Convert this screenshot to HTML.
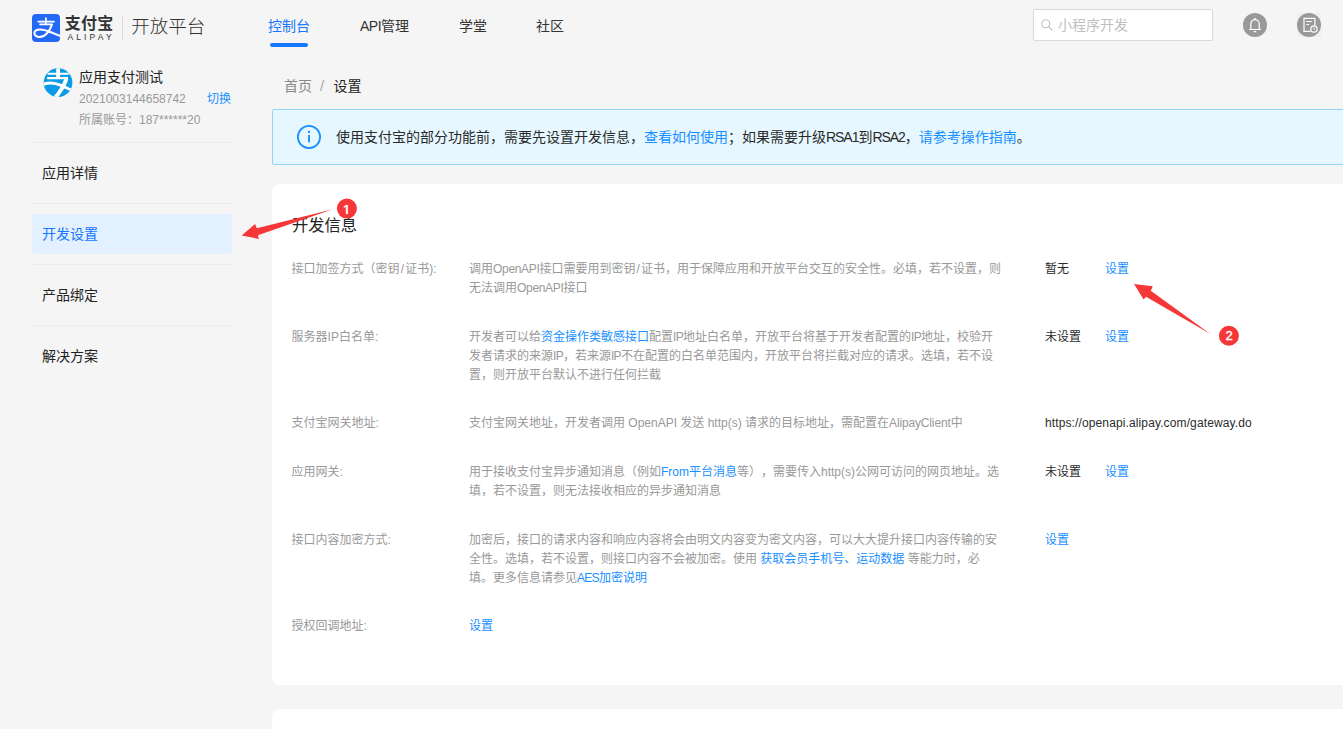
<!DOCTYPE html>
<html lang="zh-CN">
<head>
<meta charset="utf-8">
<title>开放平台 - 设置</title>
<style>
*{box-sizing:border-box;margin:0;padding:0}
html,body{width:1343px;height:729px;overflow:hidden;background:#f5f5f5}
body{font-family:"Liberation Sans","Noto Sans CJK SC",sans-serif;color:#333;position:relative;font-size:14px;text-spacing-trim:space-all}
a{color:#1890ff;text-decoration:none}
.abs{position:absolute;white-space:nowrap}
/* header */
.logo-sq{left:32px;top:14px;width:28px;height:28px;background:#2469f6;overflow:hidden;border-radius:4px}
.logo-cn{left:64.700px;top:12px;font-size:16px;font-weight:700;color:#333;letter-spacing:.3px;line-height:24px}
.logo-en{left:67.400px;top:31px;font-size:8.5px;color:#333;letter-spacing:3.150px;line-height:12px}
.logo-sep{left:122px;top:16px;width:1px;height:24px;background:#d9d9d9}
.logo-op{left:131.300px;top:12px;font-size:18.5px;color:#333;line-height:30px;font-weight:300}
.nav{top:16px;font-size:14px;line-height:20px;color:#333}
.nav.on{color:#1677ff}
.nav-bar{left:270px;top:43px;width:38px;height:4px;border-radius:2px;background:#1677ff}
.search{left:1033px;top:9px;width:180px;height:32px;background:#fff;border:1px solid #d9d9d9;border-radius:2px}
.search span{position:absolute;left:24px;top:5px;font-size:14px;line-height:20px;color:#bfbfbf}
.ico{width:24px;height:24px;border-radius:12px;background:#999}
/* sidebar */
.side-hr{left:32px;width:200px;height:1px;background:#ebebeb}
.side{left:42px;font-size:14px;line-height:20px;color:#222}
.side-on{left:32px;top:214px;width:200px;height:40px;background:#e3f0ff;border-radius:4px}
.g12{font-size:12px;line-height:18px;color:#999}
/* main */
.crumb{left:284px;top:76px;font-size:14px;line-height:20px;color:#888}
.crumb b{font-weight:400;color:#222}
.alert{left:272px;top:109px;width:1100px;height:56px;background:#e6f7ff;border:1px solid #91d5ff;border-radius:2px}
.alert-t .r{font-size:14px;letter-spacing:-1.050px}
.alert-t{left:336px;top:127px;font-size:14px;line-height:20px;color:#2a2a2a}
.card{left:272px;top:184px;width:1100px;height:501px;background:#fff;border-radius:8px}
.card2{left:272px;top:709px;width:1100px;height:60px;background:#fff;border-radius:8px}
.h{left:292px;top:212.500px;font-size:16.300px;line-height:24px;color:#222}
.t{font-size:12px;line-height:19px;color:#999;white-space:nowrap}
.lab{left:291.600px}
.desc{left:469px}
.val{left:1045px;color:#2b2b2b}
.lnk{left:1105px;color:#1890ff}
.t i{font-style:normal;letter-spacing:-.7px}
</style>
</head>
<body>
<!-- header -->
<div class="abs logo-sq"></div>
<svg class="abs" style="left:32px;top:14px" width="28" height="28" viewBox="0 0 28 28" fill="none" stroke="#fff" stroke-width="1.750" stroke-linecap="round"><path d="M6.200 7.500h15.800M13.900 4v6.200M8 10.300h12.200"/><path d="M19.800 10.800C18.800 14 17.500 16.500 15.400 18.800C13 21.500 10.500 23 7.600 23C4.500 23 2.400 21.300 2.400 19.200C2.400 17 4.800 15.500 8.200 15.500C11.500 15.500 14.500 16.500 18.300 18C21.500 19.300 25 20.800 29 22.200" stroke-width="2.100"/></svg>
<div class="abs logo-cn">支付宝</div>
<div class="abs logo-en">ALIPAY</div>
<div class="abs logo-sep"></div>
<div class="abs logo-op">开放平台</div>
<div class="abs nav on" style="left:268px">控制台</div>
<div class="abs nav-bar"></div>
<div class="abs nav" style="left:360px"><span style="letter-spacing:-.5px">API</span>管理</div>
<div class="abs nav" style="left:459px">学堂</div>
<div class="abs nav" style="left:536px">社区</div>
<div class="abs search"><span>小程序开发</span></div>
<svg class="abs" style="left:1040px;top:18px" width="14" height="14" viewBox="0 0 14 14" fill="none" stroke="#bfbfbf" stroke-width="1.1"><circle cx="5.7" cy="5.7" r="4"/><path d="M8.6 8.6L12 12" stroke-linecap="round"/></svg>
<svg class="abs" style="left:1243px;top:13px" width="24" height="24" viewBox="0 0 24 24" fill="none" stroke="#fff" stroke-width="1.2"><circle cx="12" cy="12" r="12" fill="#999" stroke="none"/><path d="M7.800 16.500V10.800a4.200 4.200 0 0 1 8.400 0v5.700M6 16.500h12M10.700 18.700h2.600"/><circle cx="12" cy="5.600" r="0.800" fill="#fff" stroke="none"/></svg>
<div class="abs" style="left:1297px;top:13px;width:24px;height:24px;background:#efefef"></div>
<svg class="abs" style="left:1297px;top:13px" width="24" height="24" viewBox="0 0 24 24" fill="none" stroke="#fff" stroke-width="1.2"><circle cx="12" cy="12" r="12" fill="#999" stroke="none"/><path d="M13.500 18.400H7V5.400h10.900v7M9.300 8.500h5.600M9.300 11.500h3"/><circle cx="17" cy="16" r="3.200" fill="#999"/><path d="M17 14.300V16l1 0.800" stroke-width="0.900"/></svg>

<!-- sidebar -->
<svg class="abs" style="left:40px;top:64px" width="36" height="36" viewBox="40 64 36 36"><defs><clipPath id="cc"><circle cx="58.050" cy="82.650" r="14.300"/></clipPath></defs><circle cx="58.050" cy="82.650" r="14.300" fill="#0b9be6"/><g clip-path="url(#cc)" fill="none" stroke="#fff"><path d="M58.100 66V78" stroke-width="3.800"/><path d="M47.600 73.850H68.800" stroke-width="2"/><path d="M47.100 78.100H68" stroke-width="2.200"/><path d="M66.500 78.300C64.800 84 62 90 54.500 98.500" stroke-width="4"/><path d="M42 84.800C48 82 54 82.300 61 85.400S68 89 73 90.400" stroke-width="3"/></g></svg>
<div class="abs side" style="left:79px;top:67px">应用支付测试</div>
<div class="abs g12" style="left:79px;top:90px">2021003144658742</div>
<div class="abs g12" style="left:207px;top:90px;color:#1890ff">切换</div>
<div class="abs g12" style="left:79px;top:111px">所属账号：187******20</div>
<div class="abs side-hr" style="top:142px"></div>
<div class="abs side" style="top:163px">应用详情</div>
<div class="abs side-hr" style="top:203px"></div>
<div class="abs side-on"></div>
<div class="abs side" style="top:224px;color:#1677ff">开发设置</div>
<div class="abs side-hr" style="top:264px"></div>
<div class="abs side" style="top:285px">产品绑定</div>
<div class="abs side-hr" style="top:325px"></div>
<div class="abs side" style="top:346px">解决方案</div>

<!-- main -->
<div class="abs crumb">首页</div>
<div class="abs crumb" style="left:320px;color:#aaa;font-size:15px">/</div>
<div class="abs crumb" style="left:333.500px;color:#222">设置</div>
<div class="abs alert"></div>
<div class="abs alert-t">使用支付宝的部分功能前，需要先设置开发信息，<a>查看如何使用</a>；如果需要升级<span class="r">RSA1</span>到<span class="r">RSA2</span>，<a>请参考操作指南</a>。</div>
<div class="abs card"></div>
<div class="abs card2"></div>
<div class="abs h">开发信息</div>

<div class="abs t lab" style="top:260px">接口加签方式（密钥<i style="letter-spacing:0;padding:0 1.100px">/</i>证书):</div>
<div class="abs t desc" style="top:260px">调用<i style="letter-spacing:-.32px">OpenAPI</i>接口需要用到密钥<i style="letter-spacing:0;padding:0 1.100px">/</i>证书，用于保障应用和开放平台交互的安全性。必填，若不设置，则<br>无法调用<i style="letter-spacing:-.32px">OpenAPI</i>接口</div>
<div class="abs t val" style="top:260px">暂无</div>
<div class="abs t lnk" style="top:260px">设置</div>

<div class="abs t lab" style="top:328px">服务器IP白名单:</div>
<div class="abs t desc" style="top:328px">开发者可以给<a>资金操作类敏感接口</a>配置<i>IP</i>地址白名单，开放平台将基于开发者配置的<i>IP</i>地址，校验开<br>发者请求的来源<i>IP</i>，若来源<i>IP</i>不在配置的白名单范围内，开放平台将拦截对应的请求。选填，若不设<br>置，则开放平台默认不进行任何拦截</div>
<div class="abs t val" style="top:328px">未设置</div>
<div class="abs t lnk" style="top:328px">设置</div>

<div class="abs t lab" style="top:414px">支付宝网关地址:</div>
<div class="abs t desc" style="top:414px">支付宝网关地址，开发者调用 OpenAPI 发送 http(s) 请求的目标地址，需配置在<i style="letter-spacing:-.15px">AlipayClient</i>中</div>
<div class="abs t val" style="top:414px;letter-spacing:.12px">https://openapi.alipay.com/gateway.do</div>

<div class="abs t lab" style="top:463px">应用网关:</div>
<div class="abs t desc" style="top:463px">用于接收支付宝异步通知消息（例如<a>From平台消息</a>等），需要传入http(s)公网可访问的网页地址。选<br>填，若不设置，则无法接收相应的异步通知消息</div>
<div class="abs t val" style="top:463px">未设置</div>
<div class="abs t lnk" style="top:463px">设置</div>

<div class="abs t lab" style="top:531px">接口内容加密方式:</div>
<div class="abs t desc" style="top:531px">加密后，接口的请求内容和响应内容将会由明文内容变为密文内容，可以大大提升接口内容传输的安<br>全性。选填，若不设置，则接口内容不会被加密。使用 <a>获取会员手机号、运动数据</a> 等能力时，必<br>填。更多信息请参见<a><i>AES</i>加密说明</a></div>
<div class="abs t lnk" style="top:531px;left:1045px">设置</div>

<div class="abs t lab" style="top:617px">授权回调地址:</div>
<div class="abs t lnk" style="top:617px;left:469px">设置</div>

<svg class="abs" style="left:297px;top:125px" width="24" height="24" viewBox="0 0 24 24" fill="none" stroke="#1890ff"><circle cx="12" cy="12" r="11.100" stroke-width="1.800"/><path d="M12 10v7.300" stroke-width="1.900"/><circle cx="12" cy="7" r="1.150" fill="#1890ff" stroke="none"/></svg>

<svg class="abs" style="left:0;top:0" width="1343" height="729" viewBox="0 0 1343 729">
<g fill="#f63737">
<path d="M241.700 235.600L255.100 224.100L256.800 228.200L332.800 209.200L257.900 235.200L258.800 238.900Z"/>
<circle cx="346.900" cy="208.600" r="10"/>
<path d="M1134 284.100L1152.800 286.300L1150.800 290.700L1210.400 333.900L1146 296.800L1143.600 299.600Z"/>
<circle cx="1228.900" cy="335.800" r="10"/>
</g>
<g fill="#fff" font-size="13" font-weight="700" text-anchor="middle" font-family="'Liberation Sans',sans-serif">
<clipPath id="c1"><path d="M338 200H356V211.600H348.050V214H345.850V211.600H338Z"/></clipPath>
<text x="346.700" y="213.500" clip-path="url(#c1)">1</text>
<text x="1229" y="340.300" font-weight="400" stroke="#fff" stroke-width=".4">2</text>
</g>
</svg>
</body>
</html>
